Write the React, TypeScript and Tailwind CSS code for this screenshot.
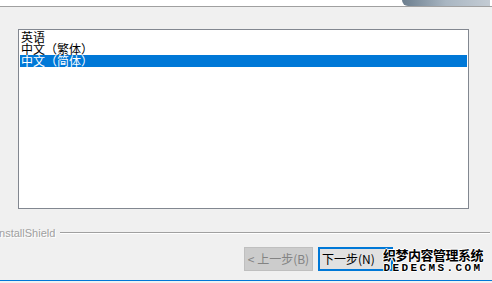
const font = "font-['SimSun','Noto_Sans_CJK_SC',sans-serif]";

export default function App() {
  const items = ['英语', '中文（繁体）', '中文（简体）'];
  return (
    <div className={`w-[492px] h-[283px] bg-[#f0f0f0] overflow-hidden relative ${font}`}>
      {/* header strip */}
      <div className="h-[7px] bg-white border-b border-[#a0a0a0] flex justify-end">
        <div className="w-[88px] mr-[2px] h-full rounded-bl-[10px] bg-gradient-to-r from-[#6c7e8e] via-[#a9b6c2] to-[#c4ccd4]" />
      </div>

      {/* list box */}
      <div className="mt-[22px] ml-[18px] w-[451px] h-[180px] bg-white border border-[#828790] p-px pt-[1px]">
        {items.map((t, i) => (
          <div
            key={t}
            className={`h-[12px] leading-[12px] text-[12px] pl-[1px] whitespace-nowrap ${
              i === 2 ? 'bg-[#0078d7] text-white' : 'text-black'
            }`}
          >
            {t}
          </div>
        ))}
      </div>

      {/* InstallShield separator */}
      <div className="mt-[18px] flex items-center">
        <span className="text-[11px] leading-[12px] text-[#a0a0a0] ml-[-4px] font-['Liberation_Sans',sans-serif] [text-shadow:1px_1px_0_#fff]">
          InstallShield
        </span>
        <div className="ml-[5px] flex-1 mr-[2px] h-[2px] border-t border-[#a0a0a0] border-b border-b-white" />
      </div>

      {/* buttons */}
      <div className="mt-[8px] flex pl-[244px] gap-[5px]">
        <div className="w-[69px] h-[24px] bg-[#cccccc] border border-[#bfbfbf] text-[#838383] text-[12px] flex items-center justify-center whitespace-nowrap">
          &lt; 上一步(B)
        </div>
        <div className="w-[75px] h-[24px] bg-[#e1e1e1] border-2 border-[#0078d7] text-black text-[12px] flex items-center pl-[2px] whitespace-nowrap">
          下一步(N)
        </div>
      </div>

      {/* watermark */}
      <div className="absolute left-[383px] top-[247px] flex flex-col items-center">
        <div className="text-[13px] leading-[15px] font-bold text-black tracking-[-0.5px] [text-shadow:1px_0_0_#fff,-1px_0_0_#fff,0_1px_0_#fff,0_-1px_0_#fff]">
          织梦内容管理系统
        </div>
        <div className="text-[11px] leading-[13px] font-bold text-black tracking-[2.4px] font-['Liberation_Mono',monospace] [text-shadow:1px_0_0_#fff,-1px_0_0_#fff,0_1px_0_#fff,0_-1px_0_#fff]">
          DEDECMS.COM
        </div>
      </div>

      {/* bottom accent */}
      <div className="absolute left-0 right-0 top-[280px] h-px bg-[#0078d7]" />
    </div>
  );
}
